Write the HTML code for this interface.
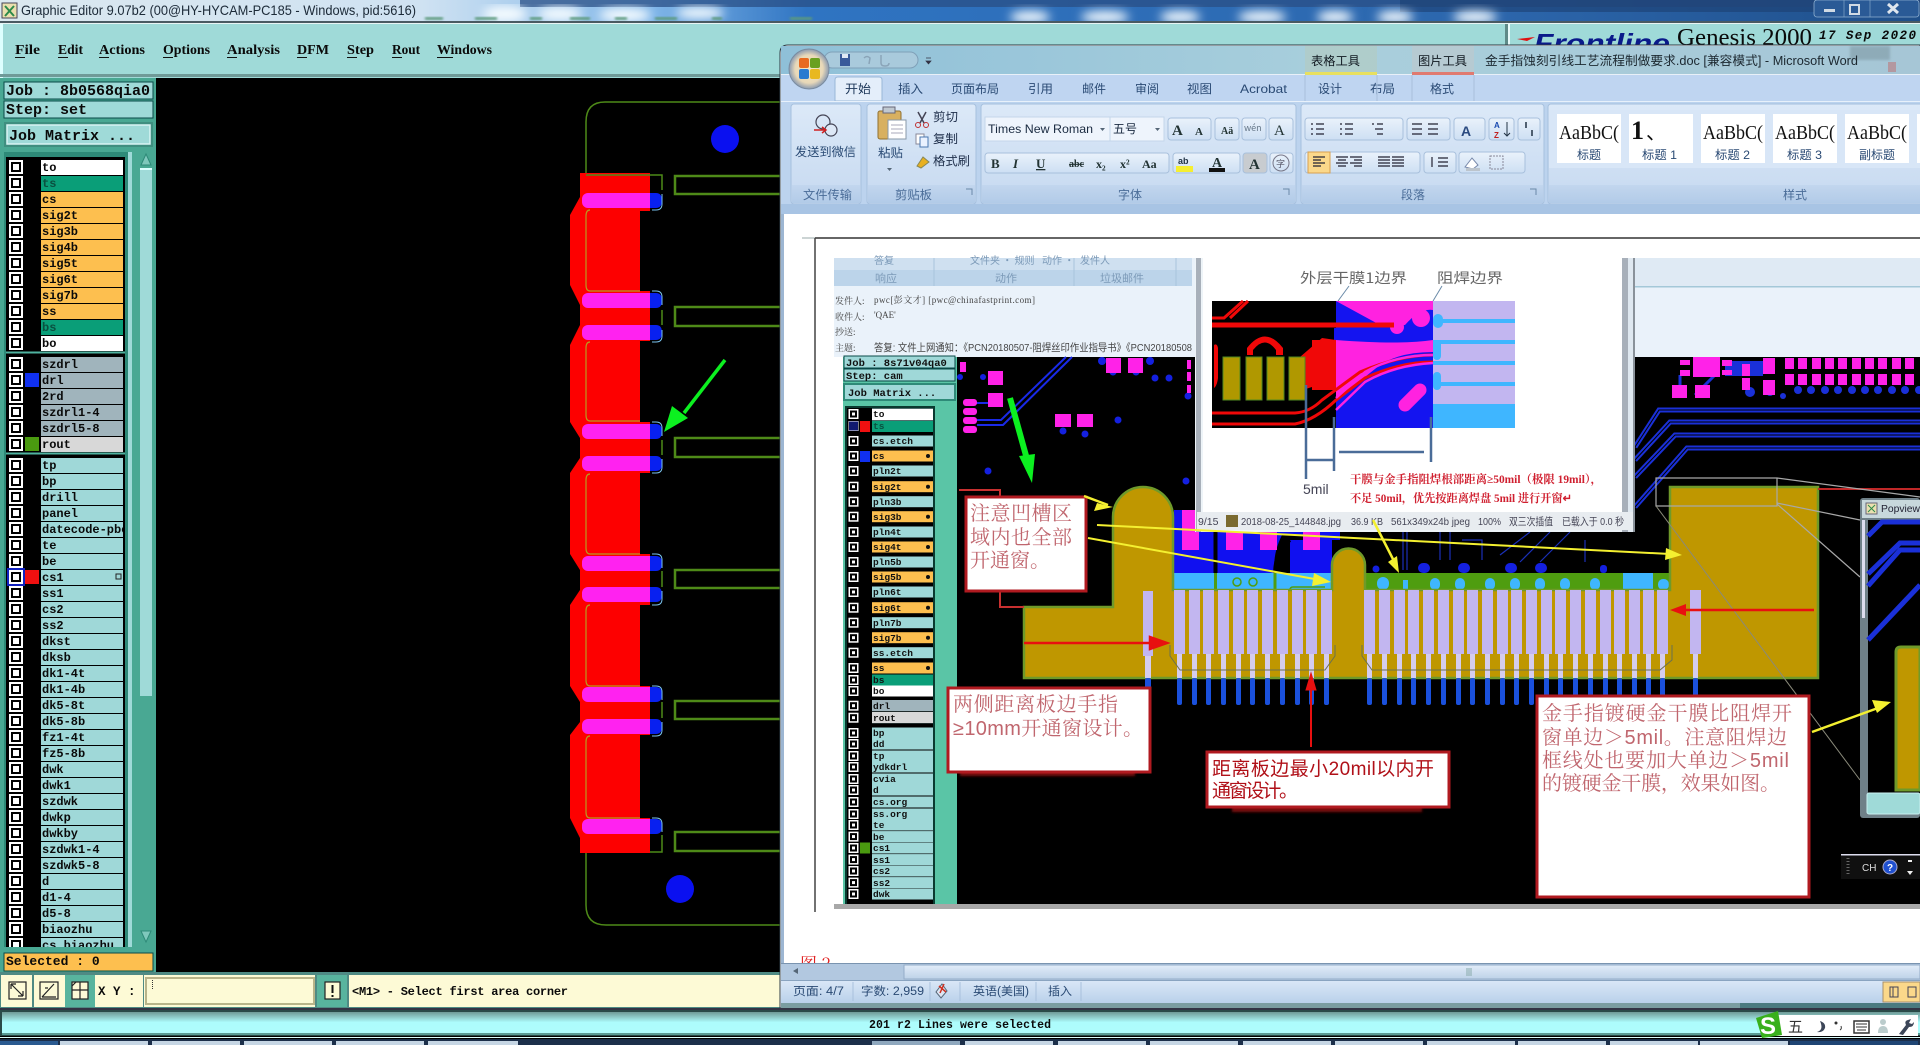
<!DOCTYPE html>
<html><head><meta charset="utf-8"><title>Graphic Editor</title>
<style>
html,body{margin:0;padding:0;background:#000;overflow:hidden}
svg{display:block;position:absolute;left:0;top:0}
text{white-space:pre}
.m{font:bold 12px "Liberation Mono","DejaVu Sans Mono",monospace;fill:#0a0a0a}
.n{font:bold 9.5px "Liberation Mono","DejaVu Sans Mono",monospace;fill:#111}
.u{font:bold 14px "Liberation Serif",serif;fill:#0a0a0a}
.z{font:12px "Liberation Sans","Noto Sans CJK SC",sans-serif;fill:#2a4a74}
.zb{font:12px "Liberation Sans","Noto Sans CJK SC",sans-serif;fill:#20304c}
.gl{font:12px "Liberation Sans","Noto Sans CJK SC",sans-serif;fill:#4a6c98}
.ss{font:9.5px "Liberation Sans","Noto Sans CJK SC",sans-serif;fill:#3a5a8a}
.aa{font:20px "Liberation Serif",serif;fill:#111}
.e{font:9px "Liberation Serif","Noto Serif CJK SC",serif;fill:#444}
.c{font:20px "Liberation Sans","Noto Serif CJK SC",serif;fill:#c0666e}
.d{font:19px "Liberation Sans","Noto Sans CJK SC",sans-serif;fill:#b01018}
.st{font:10.5px "Liberation Sans","Noto Sans CJK SC",sans-serif;fill:#445}
</style></head><body>
<svg width="1920" height="1045" viewBox="0 0 1920 1045" xmlns="http://www.w3.org/2000/svg">
<defs>
<filter id="b"><feGaussianBlur stdDeviation="5"/></filter>
<filter id="b2"><feGaussianBlur stdDeviation="1.2"/></filter>
<clipPath id="lc"><rect x="41" y="150" width="82" height="797"/></clipPath>
<linearGradient id="top" x1="0" x2="1" y1="0" y2="0"><stop offset="0" stop-color="#dbe8ef"/><stop offset=".22" stop-color="#cfe2f2"/><stop offset=".34" stop-color="#7fb5e8"/><stop offset=".42" stop-color="#2f74c2"/><stop offset=".78" stop-color="#2c66ac"/><stop offset="1" stop-color="#1f4f8a"/></linearGradient>
<linearGradient id="glass" x1="0" x2="1" y1="0" y2="0"><stop offset="0" stop-color="#8fc0d8"/><stop offset=".5" stop-color="#a9cfdc"/><stop offset="1" stop-color="#a6c6d6"/></linearGradient>
<linearGradient id="rib" x1="0" x2="0" y1="0" y2="1"><stop offset="0" stop-color="#dce9f8"/><stop offset="1" stop-color="#c6d9f0"/></linearGradient>
<linearGradient id="lab" x1="0" x2="0" y1="0" y2="1"><stop offset="0" stop-color="#c2d6ee"/><stop offset="1" stop-color="#b2cbe8"/></linearGradient>
<linearGradient id="btn" x1="0" x2="0" y1="0" y2="1"><stop offset="0" stop-color="#eaf2fb"/><stop offset="1" stop-color="#cddff3"/></linearGradient>
<linearGradient id="sta" x1="0" x2="0" y1="0" y2="1"><stop offset="0" stop-color="#dbe8f7"/><stop offset="1" stop-color="#b9d0ea"/></linearGradient>
<linearGradient id="cy" x1="0" x2="0" y1="0" y2="1"><stop offset="0" stop-color="#6f9a96"/><stop offset=".45" stop-color="#adfcfc"/><stop offset="1" stop-color="#aefcfc"/></linearGradient>
<linearGradient id="hs" x1="0" x2="0" y1="0" y2="1"><stop offset="0" stop-color="#e2edf9"/><stop offset="1" stop-color="#bed2e8"/></linearGradient>
<radialGradient id="orb"><stop offset="0" stop-color="#f8e8c0"/><stop offset=".7" stop-color="#e8d8b8"/><stop offset="1" stop-color="#8a9ab0"/></radialGradient>
<g id="ck"><rect x="9" y="-7" width="14" height="14" fill="#fff"/><rect x="11" y="-5" width="10" height="10" fill="#000"/><rect x="13" y="-3" width="6" height="6" fill="#fff"/></g>
<g id="rt"><use href="#ck"/><rect x="41" y="-7" width="82" height="15" fill="#9fd8d8"/></g>
<g id="ro"><use href="#ck"/><rect x="41" y="-7" width="82" height="15" fill="#fdbf4f"/></g>
<g id="rg"><use href="#ck"/><rect x="41" y="-7" width="82" height="15" fill="#0a9e78"/></g>
<g id="rw"><use href="#ck"/><rect x="41" y="-7" width="82" height="15" fill="#fff"/></g>
<g id="rs"><use href="#ck"/><rect x="41" y="-7" width="82" height="15" fill="#a0b4bc"/></g>
<g id="ic"><rect x="848.500" y="-5" width="10" height="10" fill="#fff"/><rect x="850" y="-3.500" width="7" height="7" fill="#000"/><rect x="852" y="-1.500" width="3" height="3" fill="#fff"/></g>
<g id="it"><use href="#ic"/><rect x="872" y="-5.500" width="61" height="11" fill="#9fd8d8"/></g>
<g id="io"><use href="#ic"/><rect x="872" y="-5.500" width="61" height="11" fill="#fdbf4f"/><circle cx="928" r="2" fill="#111"/></g>
<g id="fg"><rect x="0" y="590" width="11" height="64" fill="#c2b6f0"/><rect x="3" y="654" width="5" height="24" fill="#d4cdee"/><rect x="3" y="678" width="5" height="27" rx="2" fill="#1a50dc"/></g>
<g id="tr"><rect width="9" height="11" fill="#ff22e8"/></g>
</defs>

<!-- desktop strip -->
<rect width="1920" height="22" fill="url(#top)"/>
<rect x="520" y="0" width="1400" height="7" fill="#2a4f86" opacity=".75"/>
<rect x="1400" y="0" width="520" height="12" fill="#1c3f72" opacity=".6"/>
<g filter="url(#b)" fill="#f4fbff">
<ellipse cx="505" cy="14" rx="22" ry="8"/><ellipse cx="560" cy="14" rx="22" ry="7"/><ellipse cx="625" cy="15" rx="26" ry="7"/><ellipse cx="700" cy="13" rx="24" ry="6"/>
<ellipse cx="1030" cy="17" rx="20" ry="6"/><ellipse cx="1105" cy="17" rx="24" ry="6"/><ellipse cx="1180" cy="17" rx="20" ry="6"/><ellipse cx="1262" cy="17" rx="24" ry="6"/><ellipse cx="1335" cy="17" rx="18" ry="6"/><ellipse cx="1395" cy="17" rx="18" ry="6"/><ellipse cx="1475" cy="17" rx="22" ry="6"/>
</g>
<g fill="#5c9a7c" filter="url(#b2)"><rect x="425" y="17" width="18" height="3"/><rect x="475" y="17" width="22" height="3"/><rect x="530" y="17" width="12" height="3"/><rect x="570" y="17" width="20" height="3"/><rect x="615" y="17" width="12" height="3"/><rect x="655" y="17" width="22" height="3"/><rect x="712" y="17" width="10" height="3"/><rect x="790" y="17" width="22" height="3"/></g>
<rect x="2" y="3" width="15" height="15" fill="#eadfae" stroke="#445" stroke-width="1"/>
<path d="M5 6l9 10M14 6l-9 10" stroke="#2c8a4a" stroke-width="2"/>
<text x="21" y="15" textLength="395" lengthAdjust="spacingAndGlyphs" style="font:14px 'Liberation Sans',sans-serif;fill:#1c2a38">Graphic Editor 9.07b2 (00@HY-HYCAM-PC185 - Windows, pid:5616)</text>
<g><rect x="1814" y="0" width="105" height="17" rx="3" fill="#2a5a96" stroke="#8fb0d0" stroke-width=".8"/><path d="M1844 0v17M1870 0v17" stroke="#8fb0d0" stroke-width=".6"/><rect x="1824" y="9" width="11" height="3" fill="#d0dae4"/><rect x="1850" y="5" width="9" height="9" fill="none" stroke="#d0dae4" stroke-width="2"/><path d="M1888 4l10 9M1898 4l-10 9" stroke="#dfe6ee" stroke-width="3"/></g>

<!-- editor chrome -->
<rect y="21" width="1920" height="2" fill="#4a5a62"/><rect y="23" width="1920" height="1" fill="#e8f4f4"/>
<rect y="24" width="1920" height="54" fill="#9fdad8"/>
<rect y="24" width="3" height="54" fill="#dff"/><rect y="74" width="1505" height="3" fill="#6f9a98"/>
<rect x="1505" y="24" width="3" height="30" fill="#5f8a88"/><rect x="1508" y="24" width="2" height="30" fill="#e8fafa"/>
<path d="M1517 39l18-2-8 4z" fill="#e01010"/>
<text x="1534" y="52" style="font:italic bold 26px 'Liberation Sans',sans-serif;fill:#0a1a8a" textLength="136" lengthAdjust="spacingAndGlyphs">Frontline</text>
<text x="1677" y="45" textLength="135" lengthAdjust="spacingAndGlyphs" style="font:24px 'Liberation Serif',serif;fill:#0a0a0a">Genesis 2000</text>
<text x="1819" y="39" textLength="97" lengthAdjust="spacing" style="font:italic bold 12.5px 'Liberation Mono',monospace;fill:#0a0a0a">17 Sep 2020</text>
<g class="u">
<text x="15" y="54" textLength="25" lengthAdjust="spacingAndGlyphs">File</text><text x="58" y="54" textLength="25" lengthAdjust="spacingAndGlyphs">Edit</text><text x="99" y="54" textLength="46" lengthAdjust="spacingAndGlyphs">Actions</text><text x="163" y="54" textLength="47" lengthAdjust="spacingAndGlyphs">Options</text><text x="227" y="54" textLength="53" lengthAdjust="spacingAndGlyphs">Analysis</text><text x="297" y="54" textLength="32" lengthAdjust="spacingAndGlyphs">DFM</text><text x="347" y="54" textLength="27" lengthAdjust="spacingAndGlyphs">Step</text><text x="392" y="54" textLength="28" lengthAdjust="spacingAndGlyphs">Rout</text><text x="437" y="54" textLength="55" lengthAdjust="spacingAndGlyphs">Windows</text>
</g>
<path d="M15 57.500h10M58 57.500h10M99 57.500h10M163 57.500h10M227 57.500h10M297 57.500h10M347 57.500h10M392 57.500h10M437 57.500h16" stroke="#111"/>

<!-- left panel -->
<rect x="0" y="78" width="156" height="897" fill="#49a893"/>
<rect x="4" y="82" width="149" height="17" fill="#9fdad8" stroke="#0a4a48"/><rect x="4" y="101" width="149" height="17" fill="#9fdad8" stroke="#0a4a48"/>
<text x="6" y="95" class="m" style="font-size:15px" textLength="144">Job : 8b0568qia0</text><text x="6" y="114" class="m" style="font-size:15px">Step: set</text>
<rect x="4" y="122" width="149" height="25" fill="#3f8f80"/><rect x="7" y="125" width="143" height="19" fill="#9fdad8" stroke="#d8f4f4" stroke-width="1.500"/>
<text x="9" y="140" class="m" style="font-size:15px">Job Matrix ...</text>
<rect x="4" y="152" width="126" height="795" fill="#2e8a78"/><rect x="6" y="157" width="119" height="790" fill="#000"/>
<rect x="128" y="152" width="4" height="795" fill="#9fdad8"/>
<rect x="139" y="152" width="14" height="795" fill="#49a893"/><rect x="140" y="168" width="12" height="528" fill="#9fdad8"/><rect x="140" y="168" width="12" height="2" fill="#dff"/>
<path d="M146 154l-5 11h10zM146 942l-5-11h10z" fill="#7fc8bc" stroke="#2e8a78"/>
<path d="M6 352.500h119M6 453.500h119" stroke="#4fb3a0" stroke-width="2"/>

<use href="#rw" y="167"/><use href="#rg" y="183"/><use href="#ro" y="199"/><use href="#ro" y="215"/><use href="#ro" y="231"/><use href="#ro" y="247"/><use href="#ro" y="263"/><use href="#ro" y="279"/><use href="#ro" y="295"/><use href="#ro" y="311"/><use href="#rg" y="327"/><use href="#rw" y="343"/>
<use href="#rs" y="364"/><use href="#rs" y="380"/><use href="#rs" y="396"/><use href="#rs" y="412"/><use href="#rs" y="428"/><use href="#rs" y="444"/>
<rect x="41" y="437" width="82" height="15" fill="#d8d8d8"/>
<use href="#rt" y="465"/><use href="#rt" y="481"/><use href="#rt" y="497"/><use href="#rt" y="513"/><use href="#rt" y="529"/><use href="#rt" y="545"/><use href="#rt" y="561"/><use href="#rt" y="577"/><use href="#rt" y="593"/><use href="#rt" y="609"/><use href="#rt" y="625"/><use href="#rt" y="641"/><use href="#rt" y="657"/><use href="#rt" y="673"/><use href="#rt" y="689"/><use href="#rt" y="705"/><use href="#rt" y="721"/><use href="#rt" y="737"/><use href="#rt" y="753"/><use href="#rt" y="769"/><use href="#rt" y="785"/><use href="#rt" y="801"/><use href="#rt" y="817"/><use href="#rt" y="833"/><use href="#rt" y="849"/><use href="#rt" y="865"/><use href="#rt" y="881"/><use href="#rt" y="897"/><use href="#rt" y="913"/><use href="#rt" y="929"/><use href="#rt" y="945"/>
<rect x="25" y="373" width="14" height="14" fill="#1030f0"/><rect x="25" y="437" width="14" height="14" fill="#4a9a10"/><rect x="25" y="570" width="14" height="14" fill="#f01010"/>
<rect x="8" y="569" width="16" height="16" fill="none" stroke="#1020c0" stroke-width="2"/>
<rect x="116" y="574" width="5" height="5" fill="none" stroke="#222"/>
<g class="m" clip-path="url(#lc)">
<text x="42" y="171">to</text><text x="42" y="187" style="fill:#0a5040">ts</text><text x="42" y="203">cs</text><text x="42" y="219">sig2t</text><text x="42" y="235">sig3b</text><text x="42" y="251">sig4b</text><text x="42" y="267">sig5t</text><text x="42" y="283">sig6t</text><text x="42" y="299">sig7b</text><text x="42" y="315">ss</text><text x="42" y="331" style="fill:#0a5040">bs</text><text x="42" y="347">bo</text>
<text x="42" y="368">szdrl</text><text x="42" y="384">drl</text><text x="42" y="400">2rd</text><text x="42" y="416">szdrl1-4</text><text x="42" y="432">szdrl5-8</text><text x="42" y="448">rout</text>
<text x="42" y="469">tp</text><text x="42" y="485">bp</text><text x="42" y="501">drill</text><text x="42" y="517">panel</text><text x="42" y="533">datecode-pbe</text><text x="42" y="549">te</text><text x="42" y="565">be</text><text x="42" y="581">cs1</text><text x="42" y="597">ss1</text><text x="42" y="613">cs2</text><text x="42" y="629">ss2</text><text x="42" y="645">dkst</text><text x="42" y="661">dksb</text><text x="42" y="677">dk1-4t</text><text x="42" y="693">dk1-4b</text><text x="42" y="709">dk5-8t</text><text x="42" y="725">dk5-8b</text><text x="42" y="741">fz1-4t</text><text x="42" y="757">fz5-8b</text><text x="42" y="773">dwk</text><text x="42" y="789">dwk1</text><text x="42" y="805">szdwk</text><text x="42" y="821">dwkp</text><text x="42" y="837">dwkby</text><text x="42" y="853">szdwk1-4</text><text x="42" y="869">szdwk5-8</text><text x="42" y="885">d</text><text x="42" y="901">d1-4</text><text x="42" y="917">d5-8</text><text x="42" y="933">biaozhu</text><text x="42" y="949">cs_biaozhu</text>
</g>
<rect x="0" y="947" width="156" height="28" fill="#49a893"/>
<rect x="4" y="953" width="149" height="18" fill="#fdbf4f" stroke="#0a4a48"/>
<text x="6" y="965" class="m" style="font-size:13px">Selected : 0</text>

<!-- canvas -->
<rect x="156" y="78" width="1764" height="897" fill="#000"/>
<path d="M605 102H780M586 175V122Q586 102 605 102" fill="none" stroke="#4e8a18" stroke-width="1.500"/>
<path d="M586 853V905Q586 925 606 925H780" fill="none" stroke="#4e8a18" stroke-width="1.500"/>
<path d="M580 173H650V211H640V291H650V341H640V422H650V473H640V554H650V605H640V686H650V735H640V818H650V853H580V838L570 818V735L580 722V702L570 686V605L580 590V570L570 554V473L580 458V438L570 422V345L580 325V305L570 285V215L580 197Z" fill="#fd0000"/>
<g fill="none" stroke="#b89a20" stroke-width="1.200"><path d="M590 210Q586 210 586 216V285Q586 291 590 291H640M590 342Q586 342 586 348V415Q586 421 590 421H640M590 474Q586 474 586 480V548Q586 554 590 554H640M590 605Q586 605 586 611V680Q586 686 590 686H640M590 736Q586 736 586 742V812Q586 818 590 818H640"/></g>
<path d="M586 175H662V190M662 310V325M662 440V455M662 571V587M662 702V718M662 835V852H650M586 853V853" stroke="#4e8a18" fill="none" stroke-width="1.500"/>
<g fill="#ff22f0"><rect x="582" y="193" width="75" height="15" rx="6"/><rect x="582" y="293" width="75" height="15" rx="6"/><rect x="582" y="325" width="75" height="15" rx="6"/><rect x="582" y="424" width="75" height="15" rx="6"/><rect x="582" y="456" width="75" height="15" rx="6"/><rect x="582" y="556" width="75" height="15" rx="6"/><rect x="582" y="587" width="75" height="15" rx="6"/><rect x="582" y="687" width="75" height="15" rx="6"/><rect x="582" y="719" width="75" height="15" rx="6"/><rect x="582" y="819" width="75" height="15" rx="6"/></g>
<g fill="#0820f0"><path d="M650 193h6q6 0 6 7.500t-6 7.500h-6zM650 293h6q6 0 6 7.500t-6 7.500h-6zM650 325h6q6 0 6 7.500t-6 7.500h-6zM650 424h6q6 0 6 7.500t-6 7.500h-6zM650 456h6q6 0 6 7.500t-6 7.500h-6zM650 556h6q6 0 6 7.500t-6 7.500h-6zM650 587h6q6 0 6 7.500t-6 7.500h-6zM650 687h6q6 0 6 7.500t-6 7.500h-6zM650 719h6q6 0 6 7.500t-6 7.500h-6zM650 819h6q6 0 6 7.500t-6 7.500h-6z"/></g>
<g fill="none" stroke="#7ac4f0" stroke-width="1"><path d="M652 210h4q6 0 6-6v-10M652 291h4q6 0 6 6v8M652 342h4q6 0 6-6v-6M652 422h4q6 0 6 6v8M652 473h4q6 0 6-6v-8M652 554h4q6 0 6 6v8M652 605h4q6 0 6-6v-8M652 686h4q6 0 6 6v8M652 736h4q6 0 6-6v-8M652 818h4q6 0 6 6v8"/></g>
<g fill="none" stroke="#4e8a18" stroke-width="2.500"><path d="M780 176H675V194H780M780 307H675V326H780M780 438H675V457H780M780 570H675V588H780M780 701H675V719H780M780 832H675V851H780"/></g>
<ellipse cx="725" cy="139" rx="14" ry="14" fill="#0a10f0"/><ellipse cx="680" cy="889" rx="14" ry="14" fill="#0a10f0"/>
<path d="M725 360L684 413" stroke="#0cf020" stroke-width="3.500"/><path d="M664 432l8-26 16 12z" fill="#0cf020"/>

<!-- bottom toolbar -->
<rect x="0" y="972" width="780" height="39" fill="#4f8a84"/>
<g><rect x="1" y="975" width="31" height="32" fill="#fdfad6"/><rect x="34" y="975" width="31" height="32" fill="#fdfad6"/><rect x="65" y="975" width="30" height="32" fill="#58b49e"/><rect x="95" y="975" width="48" height="32" fill="#fdfad6"/><rect x="144" y="975" width="171" height="32" fill="#fdfad6"/><rect x="146" y="978" width="168" height="26" fill="#fdfad6" stroke="#b8b48a" stroke-width="2"/><rect x="317" y="975" width="30" height="32" fill="#58b49e"/><rect x="349" y="975" width="431" height="32" fill="#fdfad6"/></g>
<g fill="#fdfad6" stroke="#222" stroke-width="1.200"><rect x="9" y="982" width="17" height="17"/><rect x="40" y="982" width="18" height="17"/><rect x="72" y="982" width="16" height="17"/><rect x="325" y="982" width="15" height="17"/></g>
<path d="M11 984l12 12M11 984v5M11 984h5M23 996v-5M23 996h-5M42 997l12-13M42 997h14M45 988h3" fill="none" stroke="#222" stroke-width="1.200"/>
<path d="M76 982l-4 4M72 990h16M80 982v17" fill="none" stroke="#222" stroke-width="1.200"/>
<rect x="331.500" y="985" width="2" height="8" fill="#111"/><rect x="331.500" y="995" width="2" height="2" fill="#111"/>
<path d="M152.500 980v10" stroke="#333" stroke-dasharray="1 1"/>
<text x="98" y="995" class="m" style="font-size:12.500px">X Y :</text>
<text x="352" y="995" class="m" textLength="216" style="font-weight:bold">&lt;M1&gt; - Select first area corner</text>

<!-- bottom status -->
<rect y="1008" width="1920" height="37" fill="#2a4a48"/>
<rect x="2" y="1012" width="1918" height="23" fill="url(#cy)"/>
<rect x="2" y="1033" width="1918" height="2" fill="#5a9a94"/>
<rect y="1036" width="1920" height="3" fill="#000"/><rect y="1037" width="1920" height="1" fill="#dff"/>
<text x="869" y="1028" class="m" style="font-size:11.500px" textLength="182">201 r2 Lines were selected</text>
<rect y="1039" width="1920" height="6" fill="#1c2f4a"/>
<g fill="#c6d6e4"><rect x="0" y="1041" width="58" height="4" fill="#2a5a90"/><rect x="60" y="1041" width="88" height="4"/><rect x="152" y="1041" width="88" height="4"/><rect x="244" y="1041" width="88" height="4"/><rect x="336" y="1041" width="88" height="4"/><rect x="428" y="1041" width="90" height="4"/><rect x="872" y="1041" width="88" height="4" fill="#8fa8be"/><rect x="965" y="1041" width="88" height="4"/><rect x="1058" y="1041" width="88" height="4"/><rect x="1150" y="1041" width="88" height="4"/><rect x="1243" y="1041" width="88" height="4"/><rect x="1335" y="1041" width="88" height="4"/><rect x="1427" y="1041" width="88" height="4"/><rect x="1518" y="1041" width="88" height="4"/><rect x="1610" y="1041" width="88" height="4"/><rect x="1700" y="1041" width="88" height="4"/><rect x="1790" y="1041" width="128" height="4" fill="#1f4574"/></g>
<!-- sogou -->
<rect x="1775" y="1015" width="143" height="21" fill="#fff"/>
<path d="M1756 1018l22-7 4 24-20 3z" fill="#38b01c"/>
<text x="1760" y="1034" style="font:bold 24px 'Liberation Sans',sans-serif;fill:#fff">S</text>
<text x="1788" y="1032" style="font:15px 'Noto Sans CJK SC',sans-serif;fill:#333">五</text>
<path d="M1820 1021q4 9-3 11q6 1 8-4q1-5-5-7z" fill="#3c4658"/>
<circle cx="1836" cy="1023" r="1.500" fill="#333"/><path d="M1841 1026q1 3-1 4" fill="none" stroke="#333"/>
<rect x="1854" y="1021" width="15" height="12" fill="#fff" stroke="#333" stroke-width="1.500"/><path d="M1856 1024h11M1856 1027h11M1857 1030h9" stroke="#333"/>
<circle cx="1883" cy="1022" r="3" fill="#bcc"/><path d="M1878 1033q0-7 5-7t5 7z" fill="#bcc"/>
<path d="M1899 1034l7-9q-2-4 2-5l3-1-2 4 3 1 2-2q0 5-5 5l-6 8z" fill="#3c4658"/>

<!-- WORD WINDOW -->
<path d="M780 1008V53q0-8 8-8H1920V1008Z" fill="#fff" stroke="#2a3a44" stroke-width="1"/>
<rect x="781" y="46" width="1139" height="29" fill="url(#glass)"/>
<rect x="1850" y="46" width="40" height="14" fill="#7f9aa4" opacity=".6" filter="url(#b2)"/><rect x="1888" y="62" width="8" height="10" fill="#c06a6a" opacity=".5"/>
<rect x="781" y="75" width="1139" height="139" fill="#bfd5f1"/>
<rect x="781" y="74" width="1139" height="1" fill="#e8f0f8"/>
<!-- title bar tools -->
<rect x="1305" y="46" width="72" height="29" fill="#b4ccc0" opacity=".6"/><rect x="1305" y="72" width="72" height="3" fill="#e8e060"/>
<rect x="1412" y="46" width="62" height="29" fill="#c0c8cc" opacity=".6"/><rect x="1412" y="72" width="62" height="3" fill="#e07a70"/>
<text x="1311" y="65" class="zb" style="font-size:12px;fill:#101820" textLength="49" lengthAdjust="spacingAndGlyphs">表格工具</text>
<text x="1418" y="65" class="zb" style="font-size:12px;fill:#101820" textLength="49" lengthAdjust="spacingAndGlyphs">图片工具</text>
<text x="1485" y="65" class="zb" style="font-size:12.500px;fill:#1c2830" textLength="373" lengthAdjust="spacingAndGlyphs">金手指蚀刻引线工艺流程制做要求.doc [兼容模式] - Microsoft Word</text>
<!-- QAT -->
<rect x="824" y="52" width="94" height="16" rx="8" fill="#a9cadc" stroke="#7fa0b8"/>
<rect x="840" y="54" width="10" height="12" fill="#3a5a9a"/><rect x="842" y="54" width="6" height="4" fill="#e0e8f4"/>
<path d="M864 58q3-3 6 0l-1 6M881 55v8q0 3 4 3t4-3" fill="none" stroke="#8aa4b8" stroke-width="1.500"/>
<path d="M926 58h5M926 61l2.500 3 2.500-3z" stroke="#334" fill="#334" stroke-width=".7"/>
<circle cx="809" cy="69" r="20" fill="url(#orb)" stroke="#7a8ca0"/>
<rect x="799" y="58" width="10" height="10" rx="2" fill="#e86a20"/><rect x="810" y="58" width="10" height="10" rx="2" fill="#6aa020"/><rect x="799" y="69" width="10" height="10" rx="2" fill="#2a7ad0"/><rect x="810" y="69" width="10" height="10" rx="2" fill="#e8b820"/>
<!-- tabs -->
<path d="M835 101V80q0-3 3-3H879q3 0 3 3v21z" fill="#e4eefa" stroke="#9ab8d8"/>
<g class="z" style="fill:#1c3658"><text x="845" y="93" textLength="26" lengthAdjust="spacingAndGlyphs">开始</text></g>
<g class="z"><text x="898" y="93" textLength="25" lengthAdjust="spacingAndGlyphs">插入</text><text x="951" y="93" textLength="48" lengthAdjust="spacingAndGlyphs">页面布局</text><text x="1028" y="93" textLength="25" lengthAdjust="spacingAndGlyphs">引用</text><text x="1082" y="93" textLength="24" lengthAdjust="spacingAndGlyphs">邮件</text><text x="1135" y="93" textLength="24" lengthAdjust="spacingAndGlyphs">审阅</text><text x="1187" y="93" textLength="25" lengthAdjust="spacingAndGlyphs">视图</text><text x="1240" y="93" textLength="47" lengthAdjust="spacingAndGlyphs">Acrobat</text><text x="1318" y="93" textLength="24" lengthAdjust="spacingAndGlyphs">设计</text><text x="1370" y="93" textLength="25" lengthAdjust="spacingAndGlyphs">布局</text><text x="1430" y="93" textLength="24" lengthAdjust="spacingAndGlyphs">格式</text></g>
<path d="M1305 75v26M1377 75v26M1412 75v26M1474 75v26" stroke="#a8c0dc"/>
<!-- ribbon -->
<rect x="781" y="101" width="1139" height="113" fill="#bcd3ee"/>
<rect x="781" y="101" width="1139" height="1" fill="#e8f1fb"/>
<g stroke="#a6c0de" fill="url(#rib)"><rect x="791" y="104" width="70" height="100" rx="3"/><rect x="867" y="104" width="109" height="100" rx="3"/><rect x="981" y="104" width="315" height="100" rx="3"/><rect x="1301" y="104" width="243" height="100" rx="3"/><rect x="1548" y="104" width="380" height="100" rx="3"/></g>
<g fill="url(#lab)"><rect x="792" y="185" width="68" height="18"/><rect x="868" y="185" width="107" height="18"/><rect x="982" y="185" width="313" height="18"/><rect x="1302" y="185" width="241" height="18"/><rect x="1549" y="185" width="371" height="18"/></g>
<g class="gl"><text x="803" y="199" textLength="49" lengthAdjust="spacingAndGlyphs">文件传输</text><text x="895" y="199" textLength="37" lengthAdjust="spacingAndGlyphs">剪贴板</text><text x="1118" y="199" textLength="24" lengthAdjust="spacingAndGlyphs">字体</text><text x="1401" y="199" textLength="24" lengthAdjust="spacingAndGlyphs">段落</text><text x="1783" y="199" textLength="24" lengthAdjust="spacingAndGlyphs">样式</text></g>
<path d="M966 189h6v6M1283 189h6v6M1530 189h6v6" fill="none" stroke="#6a88a8"/>
<!-- group 1/2 contents -->
<g fill="none" stroke="#445" stroke-width="1.200"><circle cx="823" cy="122" r="7"/><circle cx="831" cy="130" r="6" fill="#dde8f6"/></g>
<path d="M814 130h12M822 127l4 3-4 3" stroke="#d02020" fill="none" stroke-width="1.500"/>
<text x="795" y="156" class="z" textLength="61" lengthAdjust="spacingAndGlyphs">发送到微信</text>
<rect x="878" y="111" width="23" height="28" rx="2" fill="#d8b060" stroke="#907030"/><rect x="883" y="107" width="12" height="6" fill="#c0c8d0" stroke="#667"/><rect x="888" y="120" width="18" height="19" fill="#fff" stroke="#8898a8"/><path d="M891 125h12M891 129h12M891 133h12" stroke="#aab"/>
<text x="878" y="157" class="z" textLength="25" lengthAdjust="spacingAndGlyphs">粘贴</text><path d="M887 168l2.500 3 2.500-3z" fill="#567"/>
<path d="M918 112l6 11M926 112l-6 11" stroke="#445" stroke-width="1.500"/><circle cx="918" cy="125" r="2.500" fill="none" stroke="#c03030"/><circle cx="926" cy="125" r="2.500" fill="none" stroke="#c03030"/>
<rect x="916" y="134" width="8" height="10" fill="#fff" stroke="#889"/><rect x="920" y="137" width="8" height="10" fill="#eaf2ff" stroke="#4a78b0"/>
<path d="M917 166l6-9 6 5-8 6z" fill="#e8b020" stroke="#885"/>
<text x="933" y="121" class="zb" textLength="25" lengthAdjust="spacingAndGlyphs">剪切</text><text x="933" y="143" class="zb" textLength="25" lengthAdjust="spacingAndGlyphs">复制</text><text x="933" y="165" class="zb" textLength="37" lengthAdjust="spacingAndGlyphs">格式刷</text>
<!-- font controls -->
<rect x="985" y="117" width="179" height="24" fill="#eef4fc" stroke="#c4d6ea"/><path d="M1110 117v24" stroke="#c4d6ea"/>
<text x="988" y="133" class="zb" textLength="105" lengthAdjust="spacingAndGlyphs" style="fill:#1a2a40">Times New Roman</text><path d="M1100 128l2.500 3 2.500-3zM1155 128l2.500 3 2.500-3z" fill="#567"/>
<text x="1113" y="133" class="zb" style="fill:#1a2a40">五号</text>
<g fill="url(#btn)" stroke="#a8c0dc"><rect x="1168" y="118" width="43" height="22" rx="3"/><rect x="1215" y="118" width="24" height="22" rx="3"/><rect x="1242" y="118" width="24" height="22" rx="3"/><rect x="1269" y="118" width="24" height="22" rx="3"/>
<rect x="985" y="153" width="184" height="20" rx="3"/><rect x="1173" y="153" width="67" height="20" rx="3"/><rect x="1243" y="153" width="24" height="20" rx="3" fill="#c8ccd0"/><rect x="1270" y="153" width="23" height="20" rx="3"/>
<rect x="1305" y="118" width="98" height="22" rx="3"/><rect x="1407" y="118" width="43" height="22" rx="3"/><rect x="1454" y="118" width="31" height="22" rx="3"/><rect x="1489" y="118" width="25" height="22" rx="3"/><rect x="1518" y="118" width="22" height="22" rx="3"/>
<rect x="1305" y="152" width="115" height="21" rx="3"/><rect x="1424" y="152" width="32" height="21" rx="3"/><rect x="1459" y="152" width="66" height="21" rx="3"/></g>
<g style="font-family:'Liberation Serif',serif;fill:#233">
<text x="1172" y="135" font-size="15" font-weight="bold">A</text><text x="1195" y="135" font-size="11" font-weight="bold">A</text><text x="1221" y="134" font-size="10" font-weight="bold">Aä</text><text x="1274" y="135" font-size="15">A</text>
<text x="991" y="168" font-size="13" font-weight="bold">B</text><text x="1013" y="168" font-size="13" font-style="italic" font-weight="bold">I</text><text x="1036" y="168" font-size="13" font-weight="bold" text-decoration="underline">U</text><text x="1069" y="167" font-size="10" font-weight="bold" text-decoration="line-through">abc</text><text x="1096" y="168" font-size="12" font-weight="bold">x₂</text><text x="1120" y="168" font-size="12" font-weight="bold">x²</text><text x="1142" y="168" font-size="12" font-weight="bold">Aa</text>
<text x="1212" y="167" font-size="14" font-weight="bold">A</text><text x="1249" y="169" font-size="15" font-weight="bold">A</text>
</g>
<rect x="1176" y="166" width="17" height="6" fill="#f5ee30"/><text x="1178" y="164" style="font:bold 9px 'Liberation Sans';fill:#234">ab</text>
<rect x="1209" y="168" width="16" height="4" fill="#111"/>
<circle cx="1281" cy="163" r="8" fill="none" stroke="#778"/><text x="1276" y="167" style="font:9px 'Noto Sans CJK SC';fill:#556">字</text>
<text x="1244" y="131" style="font:9px 'Noto Sans CJK SC';fill:#678">wén</text>
<rect x="1308" y="152" width="22" height="21" fill="#fbd88a" stroke="#d8a050"/>
<g stroke="#223" stroke-width="1.200"><path d="M1313 157h12M1313 160h8M1313 163h12M1313 166h8M1336 157h12M1338 160h8M1336 163h12M1338 166h8M1350 157h12M1354 160h8M1350 163h12M1354 166h8M1378 157h12M1378 160h12M1378 163h12M1378 166h12M1392 157h12M1392 160h12M1392 163h12M1392 166h12"/>
<path d="M1311 124h2M1316 124h8M1311 129h2M1316 129h8M1311 134h2M1316 134h8M1340 124h2M1345 124h8M1340 129h2M1345 129h8M1340 134h2M1345 134h8M1372 124h2M1377 124h6M1375 129h8M1377 134h6M1412 124h10M1412 129h10M1412 134h10M1428 124h10M1428 129h10M1428 134h10M1432 157v10M1438 158h10M1438 162h10M1438 166h10"/></g>
<text x="1461" y="136" style="font:bold 14px 'Liberation Sans';fill:#2a4a80">A</text>
<text x="1494" y="128" style="font:bold 8px 'Liberation Sans';fill:#1a4ab0">A</text><text x="1494" y="138" style="font:bold 8px 'Liberation Sans';fill:#c02020">Z</text><path d="M1507 122v14M1504 133l3 3 3-3" fill="none" stroke="#234"/>
<path d="M1526 122v6M1532 130v6" stroke="#234" stroke-width="1.500"/>
<path d="M1465 167l7-9 6 7-5 4z" fill="#fff" stroke="#78a"/><rect x="1466" y="168" width="14" height="3" fill="#bcc4cc"/>
<rect x="1490" y="156" width="13" height="13" fill="none" stroke="#889" stroke-dasharray="2 1"/>
<!-- style gallery -->
<rect x="1549" y="110" width="371" height="58" fill="#d8e6f7"/>
<g fill="#fff"><rect x="1557" y="114" width="64" height="49"/><rect x="1629" y="114" width="64" height="49"/><rect x="1701" y="114" width="64" height="49"/><rect x="1773" y="114" width="64" height="49"/><rect x="1845" y="114" width="64" height="49"/><rect x="1917" y="114" width="3" height="49"/></g>
<g class="aa"><text x="1559" y="139" textLength="60" lengthAdjust="spacingAndGlyphs">AaBbC(</text><text x="1631" y="139" style="font-size:26px;font-weight:bold">1</text><text x="1646" y="139">、</text><text x="1703" y="139" textLength="60" lengthAdjust="spacingAndGlyphs">AaBbC(</text><text x="1775" y="139" textLength="60" lengthAdjust="spacingAndGlyphs">AaBbC(</text><text x="1847" y="139" textLength="60" lengthAdjust="spacingAndGlyphs">AaBbC(</text></g>
<g class="z" style="font-size:12px"><text x="1577" y="159" textLength="24" lengthAdjust="spacingAndGlyphs">标题</text><text x="1642" y="159" textLength="35" lengthAdjust="spacingAndGlyphs">标题 1</text><text x="1715" y="159" textLength="35" lengthAdjust="spacingAndGlyphs">标题 2</text><text x="1787" y="159" textLength="35" lengthAdjust="spacingAndGlyphs">标题 3</text><text x="1859" y="159" textLength="36" lengthAdjust="spacingAndGlyphs">副标题</text></g>
<rect x="781" y="204" width="1139" height="10" fill="#a8c4e4"/>
<!-- document -->
<rect x="781" y="214" width="1139" height="750" fill="#fff"/>
<rect x="781" y="214" width="3" height="790" fill="#9db6d2"/>
<path d="M802 238H1920" stroke="#9aa" stroke-width="1"/><path d="M815 238H1920" stroke="#333" stroke-width="1.500"/><path d="M815 238V912" stroke="#444" stroke-width="1.500"/>

<!-- embedded screenshot: email -->
<rect x="834" y="258" width="1086" height="99" fill="#eaf2fa"/>
<rect x="834" y="258" width="358" height="28" fill="#cfe0f0"/><rect x="834" y="270" width="358" height="16" fill="#bcd4ea"/>
<rect x="1635" y="258" width="285" height="29" fill="#dfeaf4"/><rect x="1635" y="286" width="285" height="1.500" fill="#a4c8d8"/>
<path d="M934 258v28M1074 258v28M1176 258v28" stroke="#a8c4dc"/>
<g style="font:10px 'Noto Sans CJK SC',sans-serif;fill:#7c9ab8"><text x="874" y="264">答复</text><text x="970" y="264">文件夹 · 规则</text><text x="1042" y="264">动作 ·</text><text x="1080" y="264">发件人</text><text x="875" y="282" font-size="11">响应</text><text x="995" y="282" font-size="11">动作</text><text x="1100" y="282" font-size="11">垃圾邮件</text></g>
<g class="e"><text x="835" y="304">发件人:</text><text x="835" y="320">收件人:</text><text x="835" y="335">抄送:</text><text x="835" y="351">主题:</text></g>
<text x="874" y="303" textLength="161" class="e">pwc[彭文才] [pwc@chinafastprint.com]</text><text x="874" y="318" class="e">'QAE'</text>
<text x="874" y="351" textLength="318" lengthAdjust="spacingAndGlyphs" style="font:10.500px 'Liberation Sans','Noto Sans CJK SC',sans-serif;fill:#444">答复: 文件上网通知：《PCN20180507-阻焊丝印作业指导书》《PCN20180508</text>

<!-- board -->
<rect x="843" y="357" width="1077" height="547" fill="#000"/>
<rect x="834" y="357" width="9" height="547" fill="#fff"/>
<rect x="834" y="904" width="1086" height="5" fill="#a8a8a8"/>
<!-- inner panel -->
<rect x="843" y="357" width="114" height="547" fill="#5ac5a6"/>
<rect x="844" y="356" width="111" height="12" fill="#9fd8d8" stroke="#0a4a48"/><rect x="844" y="369" width="111" height="12" fill="#9fd8d8" stroke="#0a4a48"/>
<rect x="844" y="384" width="111" height="16" fill="#9fd8d8" stroke="#2e8a78" stroke-width="2"/>
<text x="846" y="366" class="n" style="font-size:10.500px">Job : 8s71v04qa0</text><text x="846" y="379" class="n" style="font-size:10.500px">Step: cam</text><text x="848" y="396" class="n" style="font-size:10.500px">Job Matrix ...</text>
<rect x="845" y="406" width="90" height="498" fill="#0a3a30"/>
<rect x="847" y="408" width="86" height="496" fill="#000"/>
<use href="#it" y="414"/><rect x="872" y="409" width="61" height="11" fill="#fff"/><use href="#it" y="426"/><rect x="872" y="421" width="61" height="11" fill="#0a9e78"/><rect x="849" y="421.500" width="9" height="9" fill="#101a70"/><rect x="860" y="421" width="10" height="11" fill="#f01010"/>
<use href="#it" y="441"/><use href="#io" y="456"/><rect x="860" y="451" width="10" height="11" fill="#1030f0"/><use href="#it" y="471"/><use href="#io" y="486.700"/><use href="#it" y="501.700"/><use href="#io" y="516.700"/><use href="#it" y="532"/><use href="#io" y="547"/><use href="#it" y="562"/><use href="#io" y="577"/><use href="#it" y="592"/><use href="#io" y="607.700"/><use href="#it" y="622.700"/><use href="#io" y="637.700"/><use href="#it" y="652.700"/><use href="#io" y="668"/><use href="#it" y="680"/><rect x="872" y="674.500" width="61" height="11" fill="#0a9e78"/><use href="#it" y="691"/><rect x="872" y="685.500" width="61" height="11" fill="#fff"/>
<use href="#it" y="705.700"/><rect x="872" y="700" width="61" height="11" fill="#a0b4bc"/><use href="#it" y="717.700"/><rect x="872" y="712" width="61" height="11" fill="#d8d8d8"/>
<use href="#it" y="733"/><use href="#it" y="744"/><use href="#it" y="756"/><use href="#it" y="767"/><use href="#it" y="779"/><use href="#it" y="790"/><use href="#it" y="802"/><use href="#it" y="814"/><use href="#it" y="825"/><use href="#it" y="836.600"/><use href="#it" y="848"/><rect x="860" y="842.500" width="10" height="11" fill="#4a9a10"/><use href="#it" y="859.600"/><use href="#it" y="871"/><use href="#it" y="882.600"/><use href="#it" y="894"/>
<g class="n"><text x="873" y="417">to</text><text x="873" y="429" style="fill:#0a5040">ts</text><text x="873" y="444">cs.etch</text><text x="873" y="459">cs</text><text x="873" y="474">pln2t</text><text x="873" y="490">sig2t</text><text x="873" y="505">pln3b</text><text x="873" y="520">sig3b</text><text x="873" y="535">pln4t</text><text x="873" y="550">sig4t</text><text x="873" y="565">pln5b</text><text x="873" y="580">sig5b</text><text x="873" y="595">pln6t</text><text x="873" y="611">sig6t</text><text x="873" y="626">pln7b</text><text x="873" y="641">sig7b</text><text x="873" y="656">ss.etch</text><text x="873" y="671">ss</text><text x="873" y="683">bs</text><text x="873" y="694">bo</text><text x="873" y="709">drl</text><text x="873" y="721">rout</text><text x="873" y="736">bp</text><text x="873" y="747">dd</text><text x="873" y="759">tp</text><text x="873" y="770">ydkdrl</text><text x="873" y="782">cvia</text><text x="873" y="793">d</text><text x="873" y="805">cs.org</text><text x="873" y="817">ss.org</text><text x="873" y="828">te</text><text x="873" y="840">be</text><text x="873" y="851">cs1</text><text x="873" y="863">ss1</text><text x="873" y="874">cs2</text><text x="873" y="886">ss2</text><text x="873" y="897">dwk</text></g>
<!-- top-left board pads -->
<g fill="#1420e0"><circle cx="1102" cy="361" r="4"/><circle cx="1150" cy="361" r="4"/><circle cx="1113" cy="372" r="3.500"/><circle cx="1136" cy="372" r="3.500"/><circle cx="1155" cy="378" r="3.500"/><circle cx="1169" cy="378" r="3.500"/><circle cx="983" cy="377" r="3"/><circle cx="960" cy="377" r="3"/><circle cx="1188" cy="396" r="3.500"/><circle cx="988" cy="471" r="3.500"/><circle cx="1186" cy="481" r="3.500"/><circle cx="1118" cy="420" r="3.500"/><circle cx="1063" cy="431" r="3.500"/><circle cx="1085" cy="434" r="3.500"/></g>
<path d="M977 425H1003L1072 357M977 420H1001L1066 357M974 403H990" fill="none" stroke="#1a2ae8" stroke-width="2"/>
<g fill="#ff22e8"><rect x="1106" y="358" width="15" height="15"/><rect x="1128" y="358" width="15" height="15"/><rect x="988" y="371" width="15" height="14"/><rect x="988" y="393" width="15" height="14"/><rect x="960" y="362" width="6" height="10"/><rect x="963" y="399" width="14" height="7" rx="3"/><rect x="963" y="408" width="14" height="7" rx="3"/><rect x="963" y="417" width="14" height="7" rx="3"/><rect x="963" y="426" width="14" height="7" rx="3"/><rect x="1055" y="414" width="16" height="13"/><rect x="1077" y="414" width="16" height="13"/><rect x="1187" y="360" width="4" height="9"/><rect x="1187" y="372" width="4" height="9"/><rect x="1187" y="385" width="4" height="8"/></g>
<!-- traces right -->
<g fill="none" stroke="#1a30d8" stroke-width="5"><path d="M1635 447L1659 410H1920M1635 460L1670 422H1920M1635 477L1675 435H1920M1635 507L1687 448H1920"/></g>
<g fill="none" stroke="#000" stroke-width="1"><path d="M1635 447L1659 410H1920M1635 460L1670 422H1920M1635 477L1675 435H1920M1635 507L1687 448H1920"/></g>
<!-- top-right pads -->
<g fill="#1a30d8"><rect x="1725" y="361" width="38" height="15"/><circle cx="1750" cy="392" r="5"/><circle cx="1770" cy="392" r="4"/><circle cx="1783" cy="396" r="3"/><circle cx="1798" cy="390" r="4"/><circle cx="1811" cy="390" r="4"/><circle cx="1825" cy="390" r="4"/><circle cx="1838" cy="390" r="4"/><circle cx="1852" cy="390" r="4"/><circle cx="1865" cy="390" r="4"/><circle cx="1878" cy="390" r="4"/><circle cx="1892" cy="390" r="4"/><circle cx="1905" cy="390" r="4"/><circle cx="1919" cy="390" r="4"/></g>
<path d="M1715 375l-20 20M1680 375v10" stroke="#1a30d8" stroke-width="3"/>
<g fill="#ff22e8"><rect x="1693" y="357" width="27" height="20"/><rect x="1680" y="360" width="10" height="5"/><rect x="1680" y="370" width="10" height="6"/><rect x="1722" y="360" width="10" height="6"/><rect x="1722" y="370" width="10" height="5"/><rect x="1672" y="385" width="15" height="13"/><rect x="1695" y="385" width="15" height="13"/><rect x="1742" y="364" width="8" height="12"/><rect x="1763" y="358" width="12" height="16"/><rect x="1742" y="378" width="8" height="12"/><rect x="1763" y="380" width="12" height="15"/></g>
<use href="#tr" x="1785" y="358"/><use href="#tr" x="1798" y="358"/><use href="#tr" x="1812" y="358"/><use href="#tr" x="1825" y="358"/><use href="#tr" x="1838" y="358"/><use href="#tr" x="1852" y="358"/><use href="#tr" x="1865" y="358"/><use href="#tr" x="1878" y="358"/><use href="#tr" x="1892" y="358"/><use href="#tr" x="1905" y="358"/>
<use href="#tr" x="1785" y="374"/><use href="#tr" x="1798" y="374"/><use href="#tr" x="1812" y="374"/><use href="#tr" x="1825" y="374"/><use href="#tr" x="1838" y="374"/><use href="#tr" x="1852" y="374"/><use href="#tr" x="1865" y="374"/><use href="#tr" x="1878" y="374"/><use href="#tr" x="1892" y="374"/><use href="#tr" x="1905" y="374"/>

<!-- mask region -->
<path d="M1174 510H1340V540H1320L1312 535H1282Q1272 555 1275 573H1174Z" fill="#1010f0"/>
<rect x="1290" y="540" width="42" height="33" fill="#1010f0"/>
<path d="M1215.500 510V573M1290 540Q1276 548 1275 573" stroke="#000" stroke-width="4" fill="none"/>
<rect x="1182" y="510" width="17" height="40" fill="#ff22e8"/><rect x="1226" y="531" width="17" height="19" fill="#ff22e8"/><rect x="1260" y="531" width="17" height="19" fill="#ff22e8"/><rect x="1303" y="531" width="17" height="19" fill="#ff22e8"/>
<rect x="1174" y="573" width="158" height="17" fill="#3fb6ff"/><rect x="1365" y="573" width="305" height="17" fill="#4f9d10"/><rect x="1623" y="573" width="30" height="17" fill="#3fb6ff"/>
<path d="M1215.500 573V590M1275 573V590" stroke="#4f9d10" stroke-width="3"/>
<g fill="none" stroke="#4f9d10" stroke-width="1.500"><circle cx="1237" cy="582" r="4"/><circle cx="1253" cy="582" r="4"/><path d="M1230 590h33M1290 590q0-3 3-3h32"/></g>
<g fill="#3fb6ff"><rect x="1377" y="577" width="12" height="13" rx="6"/><rect x="1403" y="580" width="5" height="10"/><rect x="1430" y="578" width="10" height="12" rx="5"/><rect x="1455" y="578" width="10" height="12" rx="5"/><rect x="1485" y="578" width="10" height="12" rx="5"/><rect x="1510" y="578" width="10" height="12" rx="5"/><rect x="1535" y="578" width="10" height="12" rx="5"/><rect x="1560" y="578" width="10" height="12" rx="5"/><rect x="1590" y="578" width="10" height="12" rx="5"/><rect x="1658" y="579" width="11" height="11" rx="5"/></g>
<g fill="#1420e0"><circle cx="1376" cy="569" r="3.500"/><rect x="1418" y="563" width="12" height="10" rx="5"/><rect x="1458" y="563" width="12" height="10" rx="5"/><rect x="1505" y="563" width="12" height="10" rx="5"/><rect x="1535" y="563" width="12" height="10" rx="5"/><rect x="1600" y="565" width="7" height="8" rx="3"/></g>
<g fill="none" stroke="#1a30b8" stroke-width="1.200"><path d="M1403 532V570M1407 532V570M1440 532V560M1450 532V560M1462 540H1482V560M1500 555L1530 532M1520 562L1550 532M1540 562L1570 532M1585 540V562"/></g>
<!-- gold -->
<path d="M1024 607H1113V517A30 30 0 0 1 1173 517V590H1332V565A16 16 0 0 1 1365 565V590H1670V487H1818V678H1024Z" fill="#bf9700" stroke="#6f9a2a" stroke-width="2.500"/>
<path d="M959 490H1000V497M1000 591V607H1024" fill="none" stroke="#c83030" stroke-width="2"/>
<rect x="1818" y="488" width="102" height="2" fill="#c02828"/>
<use href="#fg" x="1174"/><use href="#fg" x="1189"/><use href="#fg" x="1203"/><use href="#fg" x="1218"/><use href="#fg" x="1233"/><use href="#fg" x="1247"/><use href="#fg" x="1262"/><use href="#fg" x="1277"/><use href="#fg" x="1292"/><use href="#fg" x="1306"/><use href="#fg" x="1321"/>
<use href="#fg" x="1364"/><use href="#fg" x="1379"/><use href="#fg" x="1394"/><use href="#fg" x="1408"/><use href="#fg" x="1423"/><use href="#fg" x="1438"/><use href="#fg" x="1453"/><use href="#fg" x="1467"/><use href="#fg" x="1482"/><use href="#fg" x="1497"/><use href="#fg" x="1511"/><use href="#fg" x="1526"/><use href="#fg" x="1541"/><use href="#fg" x="1555"/><use href="#fg" x="1570"/><use href="#fg" x="1585"/><use href="#fg" x="1600"/><use href="#fg" x="1614"/><use href="#fg" x="1629"/><use href="#fg" x="1643"/><use href="#fg" x="1657"/>
<use href="#fg" x="1690"/>
<rect x="1143" y="591" width="10" height="65" fill="#c2b6f0"/><rect x="1145" y="656" width="6" height="22" fill="#d4cdee"/><rect x="1145" y="678" width="6" height="27" rx="2" fill="#1a50dc"/>
<path d="M1170 645V656L1180 670H1325L1335 656V645M1362 645V656L1372 670H1660L1672 660V645" fill="none" stroke="#6a7050" stroke-width="1"/>
<!-- selection lines -->
<g fill="none" stroke="#a8a8a8" stroke-width="1.200"><path d="M1656 478H1777V506H1656ZM1777 478L1920 497M1777 503L1860 520M1777 504L1860 577"/></g>
<path d="M1656 506L1860 780" stroke="#8a8a7a" stroke-width="1" fill="none"/>
<!-- green arrow inner -->
<path d="M1010 398L1030 470" stroke="#0cf020" stroke-width="6"/><path d="M1019 456l16-2-3 29z" fill="#0cf020"/>

<!-- popup image viewer -->
<rect x="1195" y="258" width="440" height="274" fill="#eef4f8"/>
<rect x="1196" y="258" width="5" height="274" fill="#a8b0ba"/><rect x="1622" y="258" width="6" height="274" fill="#a8b0ba"/><rect x="1628" y="258" width="5" height="274" fill="#dfe8f0"/><rect x="1633" y="258" width="2" height="274" fill="#8a929a"/>
<rect x="1203" y="258" width="419" height="254" fill="#fff"/>
<rect x="1197" y="512" width="436" height="18" fill="#e8ecf0"/>
<g class="st"><text x="1198" y="525">9/15</text><rect x="1226" y="515" width="12" height="12" fill="#7a6a30"/><text x="1241" y="525" textLength="100" lengthAdjust="spacingAndGlyphs">2018-08-25_144848.jpg</text><text x="1351" y="525" textLength="32" lengthAdjust="spacingAndGlyphs">36.9 KB</text><text x="1391" y="525" textLength="79" lengthAdjust="spacingAndGlyphs">561x349x24b jpeg</text><text x="1478" y="525" textLength="23" lengthAdjust="spacingAndGlyphs">100%</text><text x="1509" y="525" textLength="44" lengthAdjust="spacingAndGlyphs">双三次插值</text><text x="1562" y="525" textLength="62" lengthAdjust="spacingAndGlyphs">已载入于 0.0 秒</text></g>
<text x="1300" y="283" style="font:14px 'Noto Sans CJK SC',sans-serif;fill:#666" textLength="107" lengthAdjust="spacingAndGlyphs">外层干膜1边界</text>
<text x="1437" y="283" style="font:14px 'Noto Sans CJK SC',sans-serif;fill:#666" textLength="66" lengthAdjust="spacingAndGlyphs">阻焊边界</text>
<path d="M1338 301l11-15M1433 301l9-15" stroke="#6a8aa8" fill="none"/>
<!-- popup picture -->
<rect x="1212" y="301" width="124" height="127" fill="#000"/>
<rect x="1336" y="301" width="97" height="127" fill="#1414f0"/>
<rect x="1433" y="301" width="82" height="127" fill="#c2b6f0"/>
<path d="M1336 301H1433V310Q1420 308 1405 325H1380L1336 301ZM1336 340Q1400 345 1433 340V352Q1400 352 1380 365L1336 400Z" fill="#ff22e0"/>
<path d="M1336 340L1336 330L1390 325" stroke="#1414f0" stroke-width="4" fill="none"/>
<circle cx="1397" cy="327" r="7" fill="#ff22e0"/><circle cx="1421" cy="318" r="9" fill="#ff22e0"/>
<path d="M1212 325H1394" stroke="#f00808" stroke-width="5"/><path d="M1212 318H1224L1243 301M1230 318L1248 301" stroke="#f00808" stroke-width="3" fill="none"/>
<path d="M1336 340L1312 365V387L1296 392L1305 357H1300L1322 338Z" fill="#f00808"/><rect x="1312" y="340" width="24" height="50" fill="#f00808"/>
<path d="M1247 355V348Q1265 325 1283 348V355H1276V350Q1265 335 1253 350V355Z" fill="#f00808"/>
<path d="M1212 413H1295Q1310 412 1322 400L1360 372Q1400 355 1433 355" stroke="#f00808" stroke-width="3" fill="none"/>
<path d="M1212 424H1295Q1315 420 1336 400L1365 378Q1400 362 1433 362" stroke="#f00808" stroke-width="3" fill="none"/>
<path d="M1336 398L1365 372Q1395 355 1433 355M1336 410L1365 382Q1395 365 1433 363" stroke="#ff22e0" stroke-width="2.500" fill="none"/>
<g fill="#b09800" stroke="#4f8a20"><rect x="1223" y="357" width="17" height="43"/><rect x="1246" y="357" width="16" height="43"/><rect x="1267" y="357" width="17" height="43"/><rect x="1289" y="357" width="16" height="43"/></g>
<path d="M1214 345q3-2 4 3v30q-1 8-4 10z" fill="#f00808"/>
<path d="M1420 390L1405 405" stroke="#ff22e0" stroke-width="13" stroke-linecap="round"/>
<g fill="#3fb6ff"><rect x="1433" y="319" width="82" height="4"/><rect x="1433" y="340" width="82" height="4"/><rect x="1433" y="361" width="82" height="4"/><rect x="1433" y="382" width="82" height="4"/><rect x="1433" y="404" width="82" height="24"/><rect x="1433" y="314" width="10" height="14" rx="5"/><rect x="1433" y="340" width="8" height="20" rx="4"/><rect x="1433" y="372" width="8" height="18" rx="4"/></g>
<g stroke="#4a6c98" stroke-width="2.500" fill="none"><path d="M1306 385V479M1334 417V471M1431 417V462"/><path d="M1307 460H1333M1339 452H1424"/></g>
<text x="1303" y="494" style="font:14px 'Liberation Sans',sans-serif;fill:#445">5mil</text>
<text x="1350" y="483" style="font:11.500px 'Liberation Serif','Noto Serif CJK SC',serif;fill:#d02030;font-weight:bold" textLength="252" lengthAdjust="spacingAndGlyphs">干膜与金手指阻焊根部距离≥50mil（极限 19mil），</text>
<text x="1350" y="502" style="font:11.500px 'Liberation Serif','Noto Serif CJK SC',serif;fill:#d02030;font-weight:bold" textLength="222" lengthAdjust="spacingAndGlyphs">不足 50mil，优先按距离焊盘 5mil 进行开窗↵</text>

<!-- callouts -->
<g fill="#7a0c10" filter="url(#b2)"><rect x="960" y="770" width="175" height="6"/><rect x="1232" y="806" width="190" height="6"/></g>
<g fill="#fff" stroke="#b01a20" stroke-width="3"><rect x="966" y="497" width="120" height="94"/><rect x="948" y="688" width="202" height="84"/><rect x="1207" y="752" width="242" height="55"/><rect x="1537" y="696" width="272" height="201"/></g>
<g class="c">
<text x="970" y="520" textLength="102">注意凹槽区</text><text x="970" y="544" textLength="102">域内也全部</text><text x="970" y="567" textLength="80">开通窗。</text>
<text x="953" y="711" textLength="165">两侧距离板边手指</text><text x="953" y="735" textLength="190">≥10mm开通窗设计。</text>
<text x="1542" y="720" textLength="250">金手指镀硬金干膜比阻焊开</text><text x="1542" y="744" textLength="245">窗单边＞5mil。注意阻焊边</text><text x="1542" y="767" textLength="247">框线处也要加大单边＞5mil</text><text x="1542" y="790" textLength="238">的镀硬金干膜，效果如图。</text>
</g>
<g class="d"><text x="1212" y="775" textLength="222">距离板边最小20mil以内开</text><text x="1212" y="797" textLength="86">通窗设计。</text></g>

<!-- arrows -->
<g stroke="#f4f030" fill="#f4f030" stroke-width="2.500"><path d="M1084 496L1108 505"/><path d="M1097 525L1670 554" stroke-width="2"/><path d="M1088 538L1320 580" stroke-width="2"/><path d="M1373 520L1396 565"/></g>
<g fill="#f4f030"><path d="M1097 503l16 4-19 4zM1666 548l16 7-17 5zM1314 573l17 9-19 4zM1388 562l11 11-2-17z"/></g>
<g stroke="#e81010" fill="#e81010"><path d="M1024 643H1150" stroke-width="2.500"/><path d="M1150 637l17 6-17 6zM1814 610H1685" stroke-width="2.500"/><path d="M1686 604l-16 6 16 6z" stroke="none"/><path d="M1311 747V690" stroke-width="2"/><path d="M1306 690l5-17 5 17z"/></g>

<!-- popview -->
<rect x="1860" y="498" width="60" height="320" rx="3" fill="#6f8088"/>
<rect x="1862" y="500" width="58" height="18" fill="#c8d8dc"/>
<rect x="1866" y="503" width="11" height="11" fill="#ebe0b0" stroke="#667"/><path d="M1868 505l7 7M1875 505l-7 7" stroke="#2c8a4a"/>
<text x="1881" y="512" style="font:10.500px 'Liberation Sans',sans-serif;fill:#223" textLength="39" lengthAdjust="spacingAndGlyphs">Popview</text>
<rect x="1868" y="520" width="52" height="294" fill="#000"/>
<rect x="1862" y="520" width="3" height="98" fill="#dde"/>
<g fill="none" stroke="#1a30d8" stroke-width="5"><path d="M1868 536L1882 522H1920M1868 574L1900 543H1920M1868 586L1900 550H1920M1868 640L1920 585"/></g>
<path d="M1896 790V652q0-5 5-5H1920V790Z" fill="#bf9700" stroke="#6f9a2a" stroke-width="3"/>
<rect x="1867" y="793" width="53" height="21" rx="2" fill="#9fdad8" stroke="#c8f0f0"/>
<path d="M1812 732L1878 708" stroke="#f4f030" stroke-width="2.500"/><path d="M1872 700l19 2-14 11z" fill="#f4f030"/>
<!-- CH bar -->
<rect x="1841" y="854" width="79" height="25" fill="#101010"/><rect x="1841" y="854" width="79" height="1.500" fill="#dde"/>
<path d="M1848 858v18" stroke="#666" stroke-dasharray="1 2" stroke-width="3"/>
<text x="1862" y="871" style="font:10px 'Liberation Sans',sans-serif;fill:#ddd">CH</text>
<circle cx="1890" cy="867" r="7" fill="#2050d0" stroke="#aac"/><text x="1887" y="871" style="font:bold 10px 'Liberation Sans';fill:#fff">?</text>
<rect x="1908" y="860" width="4" height="2" fill="#eee"/><path d="M1907 871l3 4 3-4z" fill="#eee"/>

<!-- doc bottom -->
<text x="800" y="970" style="font:17px 'Noto Serif CJK SC',serif;fill:#e02020">图 2</text>
<rect x="781" y="963" width="1139" height="17" fill="#b2c8e0"/><rect x="781" y="963" width="1139" height="1" fill="#7a94b0"/>
<rect x="904" y="965" width="1016" height="14" fill="url(#hs)" stroke="#94acc8"/>
<path d="M1467 968v8M1469 968v8M1471 968v8" stroke="#8aa"/><path d="M793 971l5-3v6z" fill="#567"/>
<rect x="781" y="980" width="1139" height="23" fill="url(#sta)"/><rect x="781" y="980" width="1139" height="1" fill="#8aa4c0"/>
<g class="z" style="font-size:11.500px"><text x="793" y="995" textLength="51" lengthAdjust="spacingAndGlyphs">页面: 4/7</text><text x="861" y="995" textLength="63" lengthAdjust="spacingAndGlyphs">字数: 2,959</text><text x="973" y="995" textLength="56" lengthAdjust="spacingAndGlyphs">英语(美国)</text><text x="1048" y="995" textLength="24" lengthAdjust="spacingAndGlyphs">插入</text></g>
<path d="M853 982v19M930 982v19M960 982v19M1036 982v19M1081 982v19" stroke="#a8c0dc"/>
<path d="M942 984l5 7-6 7-5-6z" fill="#dde6f4" stroke="#567"/><path d="M944 984l-4 9M939 986l7 6" stroke="#d03020" stroke-width="1.500"/>
<rect x="1883" y="982" width="37" height="20" fill="#fbd88a" stroke="#a8906a"/><path d="M1893 987v10M1890 987h8v10h-8zM1908 987h8v10h-8z" stroke="#445" fill="none"/>
<rect x="781" y="1003" width="1139" height="5" fill="#7a9ca0"/>
<rect x="1740" y="1003" width="180" height="5" fill="#4a7a80"/>
<rect y="1008" width="1920" height="2" fill="#334"/>
</svg>
</body></html>
